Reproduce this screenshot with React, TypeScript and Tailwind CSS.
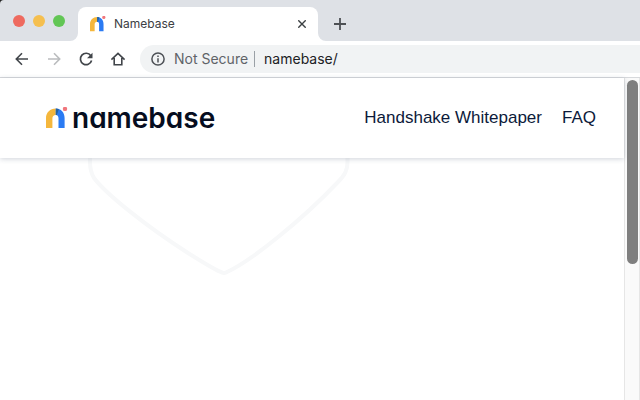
import { useState } from "react";

function LogoMark({ className }: { className?: string }) {
  return (
    <svg viewBox="0 0 22 22" className={className} aria-hidden="true">
      <path d="M0 21V11C0 5.500 4.200 1.500 9.800 1.500V8C7.600 8 6.400 9.400 6.400 11.500V21Z" fill="#f5b73c" />
      <path d="M9.800 1.500C15 1.500 18.600 5.500 18.600 11V21H12.500V11.500C12.500 9.400 11.700 8 9.800 8Z" fill="#2b7bf3" />
      <path d="M9.800 1.500C11 1.500 12 1.700 12.900 2.100L10.800 8.100L9.800 8Z" fill="#27639f" />
      <circle cx="19" cy="1.900" r="2.200" fill="#f0767c" />
    </svg>
  );
}

function Shield() {
  return (
    <svg viewBox="0 0 262 120" className="ml-[88px] h-[120px] w-[262px]" aria-hidden="true">
      <path
        d="M2 -4V4C2 10 3 15 6 20C18 36 58 68 100 95C116 105 127 112 134 114.500Q136 115.500 138 114.500C162 104 214 62 250 24C257 17 259.500 12 259.500 4V-4"
        fill="none"
        stroke="#f7f8f9"
        strokeWidth="4"
      />
    </svg>
  );
}

const iconButton = "flex h-8 w-8 cursor-pointer items-center justify-center";

export default function App() {
  const [url, setUrl] = useState("namebase/");

  return (
    <div className="flex min-h-screen flex-col overflow-hidden bg-white font-['Inter',sans-serif]">
      <div className="bg-[#222]">
        <div className="flex h-[41px] items-end rounded-tl bg-[#dee1e6]">
          <div className="flex h-[41px] w-[70px] shrink-0 items-center gap-2 pl-[13px]">
            <button type="button" aria-label="Close window" className="h-3 w-3 rounded-full bg-[#ee6a5f]" />
            <button type="button" aria-label="Minimize window" className="h-3 w-3 rounded-full bg-[#f5bf4f]" />
            <button type="button" aria-label="Zoom window" className="h-3 w-3 rounded-full bg-[#62c655]" />
          </div>
          <svg viewBox="0 0 8 8" className="h-2 w-2 shrink-0" aria-hidden="true">
            <path d="M8 0V8H0A8 8 0 0 0 8 0Z" fill="#fff" />
          </svg>
          <div className="flex h-[34px] w-60 items-center rounded-t-lg bg-white pr-2 pl-3">
            <LogoMark className="h-4 w-4" />
            <span className="ml-2 flex-1 text-xs text-[#3c4043]">Namebase</span>
            <button type="button" aria-label="Close tab" className="flex h-4 w-4 cursor-pointer items-center justify-center">
              <svg viewBox="0 0 8 8" className="h-2 w-2" stroke="#3c4043" strokeWidth="1.4">
                <path d="M0.300 0.300L7.700 7.700M7.700 0.300L0.300 7.700" />
              </svg>
            </button>
          </div>
          <svg viewBox="0 0 8 8" className="h-2 w-2 shrink-0" aria-hidden="true">
            <path d="M0 0V8H8A8 8 0 0 1 0 0Z" fill="#fff" />
          </svg>
          <button type="button" aria-label="New tab" className="flex h-[34px] w-7 cursor-pointer items-center justify-center">
            <svg viewBox="0 0 12 12" className="h-3 w-3" stroke="#4d5054" strokeWidth="1.8">
              <path d="M6 0V12M0 6H12" />
            </svg>
          </button>
        </div>
      </div>

      <div className="flex h-[37px] items-center border-b border-[#d7d9dc] pl-[6px]">
        <button type="button" aria-label="Back" className={iconButton}>
          <svg viewBox="0 0 16 16" className="h-4 w-4" fill="none" stroke="#41454a" strokeWidth="1.6">
            <path d="M14 8H2.600M8 2.300L2.300 8L8 13.700" />
          </svg>
        </button>
        <button type="button" aria-label="Forward" className={iconButton}>
          <svg viewBox="0 0 16 16" className="h-4 w-4" fill="none" stroke="#babcbe" strokeWidth="1.6">
            <path d="M2 8H13.400M8 2.300L13.700 8L8 13.700" />
          </svg>
        </button>
        <button type="button" aria-label="Reload" className={iconButton}>
          <svg viewBox="0 0 16 16" className="h-4 w-4" fill="none" stroke="#41454a" strokeWidth="1.7">
            <path d="M12.800 4.700A5.700 5.700 0 1 0 13.600 9.500" />
            <path d="M14.500 1.800V7.300H9Z" fill="#41454a" stroke="none" />
          </svg>
        </button>
        <button type="button" aria-label="Home" className={iconButton}>
          <svg viewBox="0 0 16 16" className="h-4 w-4" fill="none" stroke="#41454a" strokeWidth="1.6">
            <path d="M1.400 8.600L8 2.400L14.600 8.600M4.200 7V13.700H11.800V7" />
          </svg>
        </button>
        <div className="ml-[6px] flex h-7 flex-1 items-center rounded-l-full bg-[#f1f3f4] pl-[11px] text-sm">
          <svg viewBox="0 0 14 14" className="h-[14px] w-[14px] shrink-0" aria-hidden="true">
            <circle cx="7" cy="7" r="6.100" fill="none" stroke="#4d5156" strokeWidth="1.5" />
            <path d="M7 6.200V10.400M7 3.500V5" stroke="#4d5156" strokeWidth="1.5" />
          </svg>
          <label htmlFor="address" className="ml-[9px] shrink-0 text-[#5f6368]">Not Secure</label>
          <span className="ml-[6px] h-4 w-px shrink-0 bg-[#9aa0a6]" />
          <input
            id="address"
            type="text"
            value={url}
            onChange={(e) => setUrl(e.target.value)}
            className="ml-[9px] min-w-0 flex-1 bg-transparent text-[#202124] outline-none"
          />
        </div>
      </div>

      <div className="flex flex-1">
        <main className="flex-1">
          <header className="relative flex h-20 items-center justify-between bg-white pr-7 pl-[46px] shadow-[0_1px_5px_rgba(40,60,90,0.22)]">
            <a href="/" className="flex items-center gap-1 text-[#060d20]">
              <LogoMark className="h-[22px] w-[22px]" />
              <span className="text-[28px] leading-8 font-semibold [font-feature-settings:'cv11']">namebase</span>
            </a>
            <nav className="flex gap-5 font-['Liberation_Sans',sans-serif] text-[17px] leading-7 text-[#0c1a3a]">
              <a href="/whitepaper">Handshake Whitepaper</a>
              <a href="/faq">FAQ</a>
            </nav>
          </header>
          <Shield />
        </main>
        <div className="flex w-4 shrink-0 justify-center border-x border-[#e6e6e6] bg-[#fafafa] pt-[2px]">
          <div className="h-[184px] w-[11px] rounded-full bg-[#7f7f7f]" />
        </div>
      </div>
    </div>
  );
}
